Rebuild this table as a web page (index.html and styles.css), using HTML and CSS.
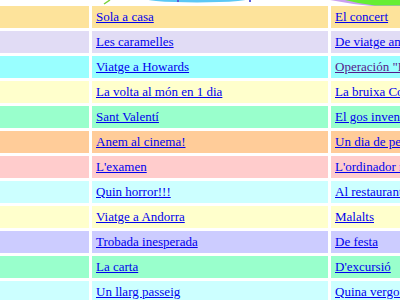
FILE: index.html
```html
<!DOCTYPE html>
<html>
<head>
<meta charset="utf-8">
<link rel="stylesheet" href="styles.css">
</head>
<body>
<div class="page">
  <div class="banner">
    <svg width="400" height="6" viewBox="0 0 400 6">
      <path d="M104 4 L110 0" stroke="#7ad23a" stroke-width="1.5" fill="none"/>
      <ellipse cx="197" cy="-3" rx="58" ry="5.5" fill="#5cc8f5"/>
      <rect x="177" y="0" width="2" height="2" fill="#5a5ad8"/>
      <rect x="249" y="0" width="2" height="2" fill="#5a5ad8"/>
      <path d="M330 0 Q350 4 372 6 L400 6 L400 0 Z" fill="#c9a0f0"/>
      <path d="M345 0 Q360 4 375 5.5 L400 5.5 L400 0 Z" fill="#66ee33"/>
    </svg>
  </div>
  <div class="grid">
    <div class="c r1"></div><div class="c r1"><a href="#">Sola a casa</a></div><div class="c r1"><a href="#">El concert</a></div>
    <div class="c r2"></div><div class="c r2"><a href="#">Les caramelles</a></div><div class="c r2"><a href="#">De viatge amb l'escola</a></div>
    <div class="c r3"></div><div class="c r3"><a href="#">Viatge a Howards</a></div><div class="c r3"><a class="visited" href="#">Operación "Fútbol"</a></div>
    <div class="c r4"></div><div class="c r4"><a href="#">La volta al món en 1 dia</a></div><div class="c r4"><a href="#">La bruixa Cornèlia</a></div>
    <div class="c r5"></div><div class="c r5"><a href="#">Sant Valentí</a></div><div class="c r5"><a href="#">El gos inventor</a></div>
    <div class="c r6"></div><div class="c r6"><a href="#">Anem al cinema!</a></div><div class="c r6"><a href="#">Un dia de pesca</a></div>
    <div class="c r7"></div><div class="c r7"><a href="#">L'examen</a></div><div class="c r7"><a href="#">L'ordinador nou</a></div>
    <div class="c r8"></div><div class="c r8"><a href="#">Quin horror!!!</a></div><div class="c r8"><a href="#">Al restaurant</a></div>
    <div class="c r9"></div><div class="c r9"><a href="#">Viatge a Andorra</a></div><div class="c r9"><a href="#">Malalts</a></div>
    <div class="c r10"></div><div class="c r10"><a href="#">Trobada inesperada</a></div><div class="c r10"><a href="#">De festa</a></div>
    <div class="c r11"></div><div class="c r11"><a href="#">La carta</a></div><div class="c r11"><a href="#">D'excursió</a></div>
    <div class="c r12"></div><div class="c r12"><a href="#">Un llarg passeig</a></div><div class="c r12"><a href="#">Quina vergonya</a></div>
  </div>
</div>
</body>
</html>
```
FILE: styles.css
```css
html, body {
  margin: 0;
  padding: 0;
  background: #ffffff;
  overflow: hidden;
}
.page {
  width: 400px;
  height: 300px;
  overflow: hidden;
  display: flex;
  flex-direction: column;
}
.banner {
  height: 6px;
  flex: none;
  overflow: hidden;
}
.banner svg {
  display: block;
}
.grid {
  display: grid;
  grid-template-columns: 89px 236px 100px;
  grid-auto-rows: 22px;
  gap: 3px;
  font-family: "Liberation Serif", "Times New Roman", serif;
  font-size: 13px;
}
.c {
  display: flex;
  align-items: center;
  padding-left: 4px;
  white-space: nowrap;
  overflow: hidden;
}
.c a {
  color: #0000ee;
  text-decoration: underline;
}
.c a.visited {
  color: #551a8b;
}
.r1 { background: #fde39b; }
.r2 { background: #e1dcf5; }
.r3 { background: #99ffff; }
.r4 { background: #ffffcc; }
.r5 { background: #99ffcc; }
.r6 { background: #ffcc99; }
.r7 { background: #ffcccc; }
.r8 { background: #ccffff; }
.r9 { background: #ffffcc; }
.r10 { background: #ccccff; }
.r11 { background: #99ffcc; }
.r12 { background: #ccffff; }
```
